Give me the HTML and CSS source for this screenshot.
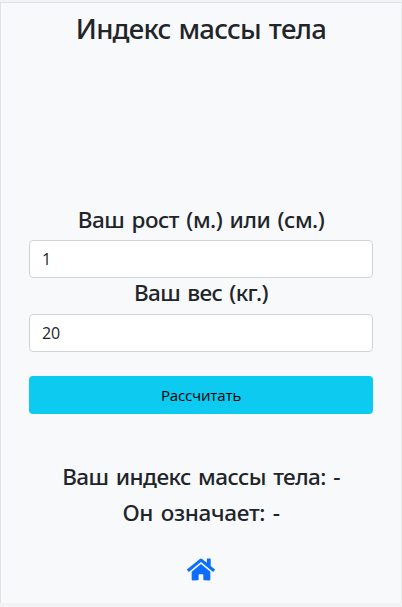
FILE: index.html
```html
<!DOCTYPE html>
<html lang="ru">
<head>
<meta charset="utf-8">
<meta name="viewport" content="width=device-width, initial-scale=1">
<title>Индекс массы тела</title>
<link rel="stylesheet" href="styles.css">
</head>
<body>
<main class="panel">
  <h1 class="title">Индекс массы тела</h1>
  <form class="form">
    <label class="label label-height" for="height">Ваш рост (м.) или (см.)</label>
    <input class="field" id="height" type="text" value="1">
    <label class="label label-weight" for="weight">Ваш вес (кг.)</label>
    <input class="field" id="weight" type="text" value="20">
    <button class="submit" type="button">Рассчитать</button>
  </form>
  <section class="results">
    <p class="result result-index">Ваш индекс массы тела: -</p>
    <p class="result result-meaning">Он означает: -</p>
  </section>
  <a class="home" href="#" aria-label="Домой">
    <svg viewBox="0 0 576 512" fill="currentColor" aria-hidden="true"><path d="M280.37 148.26L96 300.11V464a16 16 0 0 0 16 16l112.06-.29a16 16 0 0 0 15.92-16V368a16 16 0 0 1 16-16h64a16 16 0 0 1 16 16v95.64a16 16 0 0 0 16 16.05L464 480a16 16 0 0 0 16-16V300L295.67 148.26a12.19 12.19 0 0 0-15.3 0zM571.6 251.47L488 182.56V44.05a12 12 0 0 0-12-12h-56a12 12 0 0 0-12 12v72.61L318.47 43a48 48 0 0 0-61 0L4.34 251.47a12 12 0 0 0-1.6 16.9l25.5 31A12 12 0 0 0 45.15 301l235.22-193.74a12.19 12.19 0 0 1 15.3 0L530.9 301a12 12 0 0 0 16.9-1.6l25.5-31a12 12 0 0 0-1.7-16.93z"/></svg>
  </a>
</main>
</body>
</html>
```
FILE: styles.css
```css
* {
  box-sizing: border-box;
}

body {
  margin: 0;
  height: 607px;
  padding: 2px 0 4px;
  overflow: hidden;
  background: #f1f3f4;
  color: #212529;
  font-family: "Noto Sans", "Open Sans", sans-serif;
}

.panel {
  height: 601px;
  padding: 9px 28px 0;
  border: 1px solid #dee2e6;
  border-bottom: 0;
  border-right-color: #e9ecef;
  background: #f8f9fb;
  text-align: center;
}

.title {
  height: 34px;
  margin: 0;
  font-size: 27.5px;
  font-weight: 500;
  line-height: 34px;
  white-space: nowrap;
  letter-spacing: -0.75px;
  word-spacing: 1.5px;
}

.form {
  display: flex;
  flex-direction: column;
  margin-top: 160px;
}

.label {
  height: 34px;
  font-size: 22.5px;
  font-weight: 500;
  line-height: 28px;
  white-space: nowrap;
  letter-spacing: -0.5px;
  word-spacing: 2px;
}

.label-weight {
  height: 36px;
  line-height: 30px;
  letter-spacing: -0.65px;
}

.field {
  width: 100%;
  height: 38px;
  padding: 0 12px;
  border: 1px solid #ced4da;
  border-radius: 4px;
  background: #fff;
  color: #212529;
  font: 400 16px "Open Sans", sans-serif;
  letter-spacing: -0.2px;
}

.submit {
  height: 38px;
  margin-top: 24px;
  padding: 0;
  border: 0;
  border-radius: 4px;
  background: #0dcaf0;
  color: #000;
  font: 400 15px "Open Sans", sans-serif;
  letter-spacing: -0.15px;
}

.results {
  margin-top: 45px;
}

.result {
  margin: 0;
  height: 36px;
  font-size: 22.5px;
  font-weight: 500;
  line-height: 36px;
  white-space: nowrap;
  letter-spacing: -0.55px;
  word-spacing: 2px;
}

.result-meaning {
  letter-spacing: -0.3px;
}

.home {
  display: flex;
  justify-content: center;
  margin-top: 26px;
  color: #0d6efd;
}

.home svg {
  width: 28px;
  height: 25px;
}
```
